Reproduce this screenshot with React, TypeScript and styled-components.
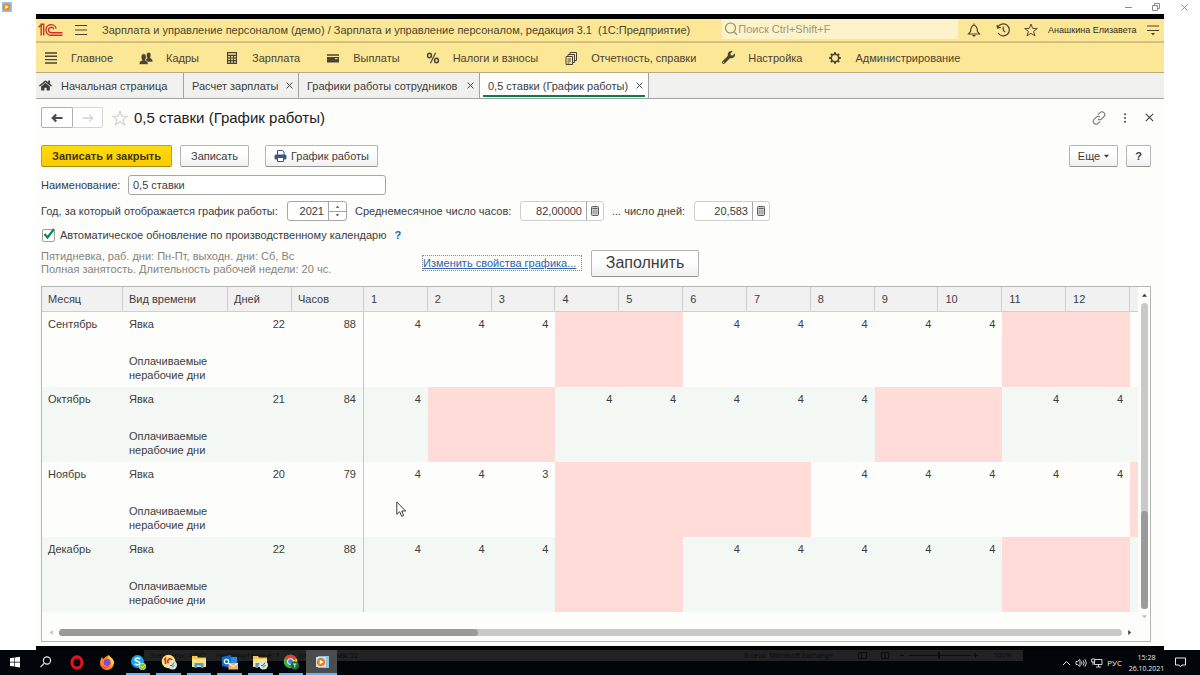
import React from "react";
import styled, { createGlobalStyle, css } from "styled-components";
import { FaHome, FaWrench } from "react-icons/fa";

const Global = createGlobalStyle`
  *, *::before, *::after { box-sizing: border-box; }
  body {
    margin: 0;
    background: #ffffff;
    color: #3c3c3c;
    font: 11px/14px "Liberation Sans", Arial, sans-serif;
  }
  button, input { font: inherit; color: inherit; }
`;

const Screen = styled.div`
  position: relative;
  display: flex;
  flex-direction: column;
  min-height: 100vh;
`;

const PlayerBar = styled.header`
  display: flex;
  justify-content: space-between;
  height: 14px;
  padding: 0 2px;
  color: #8a8a8a;
`;

const PlainButton = styled.button<{ $w?: number; $h?: number }>`
  display: inline-flex;
  align-items: center;
  justify-content: center;
  flex: none;
  width: ${(p) => (p.$w ? `${p.$w}px` : "auto")};
  height: ${(p) => (p.$h ? `${p.$h}px` : "auto")};
  padding: 0;
  border: 0;
  background: none;
`;

const Group = styled.div`
  display: flex;
  align-items: center;
`;

const AppWindow = styled.div`
  flex: 1;
  display: flex;
  flex-direction: column;
  margin: 0 36px;
  border-top: 5px solid #000;
  border-bottom: 4px solid #000;
  background: #fdfdfc;
`;

const TitleBar = styled.div`
  display: flex;
  align-items: center;
  height: 24px;
  background: #fce797;
  border-bottom: 2px solid #d3c07f;
  padding-left: 2px;
`;

const AppTitle = styled.div`
  white-space: nowrap;
  margin: 0 32px 0 3px;
  color: #4a4430;
`;

const Search = styled.label`
  display: flex;
  align-items: center;
  flex: 1;
  min-width: 0;
  height: 20px;
  margin-bottom: 2px;
  padding-left: 2px;
  background: #fdf3cb;
`;

const SearchInput = styled.input`
  flex: 1;
  min-width: 0;
  padding: 0;
  border: 0;
  background: none;
  &::placeholder { color: #9d9678; opacity: 1; }
`;

const UserArea = styled.div`
  display: flex;
  align-items: center;
  width: 206px;
  padding-left: 2px;
`;

const UserName = styled.span`
  flex: 1;
  font-size: 9px;
  white-space: nowrap;
  color: #2e2a1c;
  padding-left: 4px;
`;

const Sections = styled.nav`
  display: flex;
  align-items: center;
  gap: 26px;
  height: 30px;
  padding-left: 8px;
  background: #fce797;
  border-bottom: 1px solid #b9ab7d;
`;

const Section = styled.a`
  display: flex;
  align-items: center;
  gap: 13px;
  color: #4a4430;
  text-decoration: none;
  white-space: nowrap;
  svg { flex: none; }
`;

const Tabs = styled.div`
  display: flex;
  height: 26px;
  background: #f0f0ef;
  border-bottom: 1px solid #a3a3a3;
`;

const Tab = styled.div<{ $active?: boolean; $w: number }>`
  position: relative;
  display: flex;
  align-items: center;
  justify-content: space-between;
  width: ${(p) => p.$w}px;
  padding: 0 4px 0 8px;
  border-right: 1px solid #a3a3a3;
  white-space: nowrap;
  ${(p) =>
    p.$active &&
    css`
      background: #fff;
      &::after {
        content: "";
        position: absolute;
        left: 3px;
        right: 3px;
        bottom: 1px;
        height: 2px;
        background: #0b8048;
      }
    `}
`;

const HomeTab = styled(Tab)`
  justify-content: flex-start;
  gap: 9px;
  padding-left: 3px;
`;

const Form = styled.main`
  flex: 1;
  display: flex;
  flex-direction: column;
  padding: 8px 13px 4px 5px;
`;

const FormHead = styled.div`
  display: flex;
  align-items: center;
  height: 21px;
  margin: 0 -11px 17px 0;
`;

const NavButtons = styled.div`
  display: flex;
  height: 21px;
  border: 1px solid #d4d4d4;
  border-radius: 2px;
  margin-right: 9px;
`;

const NavButton = styled.button<{ $on?: boolean }>`
  display: flex;
  align-items: center;
  justify-content: center;
  width: ${(p) => (p.$on ? 32 : 29)}px;
  margin: ${(p) => (p.$on ? "-1px 0 -1px -1px" : "0")};
  padding: 0;
  border: ${(p) => (p.$on ? "1px solid #b0b0b0" : "0")};
  border-radius: 2px;
  background: #fff;
  color: ${(p) => (p.$on ? "#4a4a4a" : "#d2d2d2")};
`;

const FormTitle = styled.h1`
  flex: 1;
  margin: 0 0 0 6px;
  font-size: 15px;
  line-height: 20px;
  font-weight: 400;
  color: #1c1c1c;
`;

const Toolbar = styled.div`
  display: flex;
  gap: 8px;
  height: 22px;
  margin-bottom: 8px;
`;

const Button = styled.button<{ $w: number; $primary?: boolean; $big?: boolean }>`
  display: flex;
  align-items: center;
  justify-content: center;
  gap: 4px;
  width: ${(p) => p.$w}px;
  height: ${(p) => (p.$big ? 27 : 22)}px;
  padding: 0;
  border: 1px solid #b5b5b5;
  border-bottom-color: #929292;
  border-radius: 2px;
  background: linear-gradient(#ffffff 40%, #f0f0f0);
  font-size: ${(p) => (p.$big ? 16 : 11)}px;
  white-space: nowrap;
  ${(p) =>
    p.$primary &&
    css`
      border-color: #c9a400;
      border-bottom-color: #a88900;
      background: linear-gradient(#ffdb0a, #fccb00);
      color: #3d3615;
      font-weight: 700;
    `}
`;

const PrintButton = styled(Button)`
  margin-left: 8px;
`;

const Spacer = styled.div`
  flex: 1;
`;

const FieldRow = styled.div`
  display: flex;
  align-items: center;
  height: 20px;
  margin-bottom: 6px;
  white-space: nowrap;
`;

const Label = styled.label<{ $w?: number; $after?: boolean }>`
  width: ${(p) => (p.$w ? `${p.$w}px` : "auto")};
  padding-left: ${(p) => (p.$after ? 8 : 0)}px;
  flex: none;
`;

const FieldBox = styled.div<{ $w: number; $light?: boolean }>`
  display: flex;
  width: ${(p) => p.$w}px;
  height: 20px;
  border: 1px solid ${(p) => (p.$light ? "#cfcfcf" : "#a6a6a6")};
  border-radius: 3px;
  background: #fff;
  overflow: hidden;
`;

const Field = styled.input<{ $right?: boolean }>`
  flex: 1;
  min-width: 0;
  padding: 0 4px;
  border: 0;
  background: none;
  text-align: ${(p) => (p.$right ? "right" : "left")};
`;

const Spin = styled.div`
  display: flex;
  flex-direction: column;
  width: 18px;
  border-left: 1px solid #a6a6a6;
  button { flex: 1; }
  button + button { border-top: 1px solid #a6a6a6; }
`;

const CalcButton = styled(PlainButton)`
  border-left: 1px solid #a6a6a6;
`;

const CheckRow = styled.div`
  display: flex;
  align-items: center;
  height: 16px;
  margin-bottom: 6px;
`;

const CheckBox = styled.span`
  position: relative;
  width: 13px;
  height: 13px;
  margin: 0 5px 0 1px;
  svg { position: absolute; left: 1px; top: -2px; pointer-events: none; }
`;

const CheckInput = styled.input`
  appearance: none;
  display: block;
  width: 13px;
  height: 13px;
  margin: 0;
  border: 1px solid #a0a0a0;
  border-radius: 2px;
  background: #fff;
`;

const Help = styled(PlainButton)`
  margin-left: 8px;
  font-weight: 700;
  color: #1668b0;
`;

const Summary = styled.div`
  display: flex;
  align-items: center;
  height: 28px;
  margin-bottom: 9px;
`;

const Info = styled.p`
  width: 381px;
  margin: 0;
  line-height: 13px;
  color: #85857a;
  white-space: nowrap;
`;

const EditLink = styled.a`
  width: 160px;
  margin-right: 9px;
  border: 1px dotted #8a8a8a;
  color: #2e62ad;
  white-space: nowrap;
`;

const GridFrame = styled.section`
  flex: 1;
  display: flex;
  flex-direction: column;
  border: 1px solid #b4b6b4;
`;

const GridBody = styled.div`
  flex: 1;
  display: flex;
`;

const TableWrap = styled.div`
  flex: 1;
  min-width: 0;
`;

const Table = styled.table`
  width: 100%;
  table-layout: fixed;
  border-collapse: separate;
  border-spacing: 0;
`;

const HeadCell = styled.th<{ $day?: boolean }>`
  height: 25px;
  padding: 0 0 0 ${(p) => (p.$day ? 7 : 6)}px;
  text-align: left;
  font-weight: 400;
  background: #f1f1f1;
  border-right: 1px solid #cfcfcf;
  border-bottom: 1px solid #cfcfcf;
  &:last-child { border-right: 0; padding: 0; }
`;

const Row = styled.tr<{ $even: boolean }>`
  height: 75px;
  background: ${(p) => (p.$even ? "#f4f8f4" : "#fdfdfc")};
`;

const Cell = styled.td<{ $num?: boolean; $off?: boolean; $line?: boolean }>`
  padding: 5px 7px 5px 6px;
  vertical-align: top;
  text-align: ${(p) => (p.$num ? "right" : "left")};
  background: ${(p) => (p.$off ? "#ffdcd8" : "transparent")};
  border-right: ${(p) => (p.$line ? "1px solid #c4c8c4" : "0")};
  &:last-child { padding: 0; }
`;

const Kind = styled.div`
  & + & { margin-top: 23px; }
`;

const VScroll = styled.div`
  display: flex;
  flex-direction: column;
  align-items: center;
  width: 12px;
  padding: 6px 0 5px;
  gap: 5px;
`;

const HScroll = styled.div`
  display: flex;
  align-items: center;
  gap: 5px;
  height: 17px;
  padding: 0 18px 0 7px;
`;

const Track = styled.div<{ $vertical?: boolean }>`
  flex: 1;
  display: flex;
  flex-direction: ${(p) => (p.$vertical ? "column" : "row")};
  justify-content: ${(p) => (p.$vertical ? "flex-end" : "flex-start")};
  ${(p) => (p.$vertical ? "width: 7px;" : "height: 7px;")}
  border-radius: 4px;
  background: #c9c9c9;
`;

const Thumb = styled.div<{ $size: string; $vertical?: boolean }>`
  ${(p) => (p.$vertical ? `height: ${p.$size};` : `width: ${p.$size}; height: 7px;`)}
  border-radius: 4px;
  background: #9b9b9b;
`;

const Pointer = styled.svg`
  position: absolute;
  left: 396px;
  top: 501px;
`;

const Taskbar = styled.footer`
  position: relative;
  display: flex;
  justify-content: space-between;
  height: 25px;
  background: #020509;
  color: #e8e8e8;
  font-family: "Open Sans", "Noto Sans", sans-serif;
`;

const StatusGhost = styled.div`
  position: absolute;
  top: 0;
  left: 12%;
  right: 177px;
  height: 11px;
  padding: 0 12px 0 6px;
  display: flex;
  align-items: center;
  gap: 10px;
  background: #222222;
  color: #0b0b0b;
  font-size: 7px;
  line-height: 9px;
  white-space: nowrap;
`;

const Apps = styled.div`
  position: relative;
  display: flex;
  width: 337px;
`;

const AppButton = styled.button<{ $running?: boolean; $current?: boolean }>`
  flex: 1;
  position: relative;
  display: flex;
  justify-content: center;
  padding: 4px 0 0;
  border: 0;
  background: ${(p) => (p.$current ? "#4a4c4e" : "none")};
  svg { display: block; width: 16px; height: 16px; }
  &::after {
    content: "";
    position: absolute;
    left: ${(p) => (p.$current ? 0 : 3)}px;
    right: ${(p) => (p.$current ? 0 : 3)}px;
    bottom: 0;
    height: ${(p) => (p.$running ? 2 : 0)}px;
    background: #6cb2ec;
  }
`;

const Tray = styled.div`
  position: relative;
  display: flex;
  align-items: center;
  gap: 4px;
  padding-right: 14px;
  font-size: 8px;
`;

const Clock = styled.time`
  width: 37px;
  margin: 0 6px 0 2px;
  font-size: 7px;
  line-height: 11px;
  text-align: center;
`;

const Cross = ({ size = 7, w = 1.1 }: { size?: number; w?: number }) => (
  <svg width={size} height={size} viewBox="0 0 8 8" stroke="currentColor" strokeWidth={w}>
    <path d="M.7.7 7.3 7.3M7.3.7.7 7.3" />
  </svg>
);

const Arrow = ({ d, color = "#3c3c3c" }: { d: string; color?: string }) => (
  <svg width="5" height="5" viewBox="0 0 6 6" fill={color}>
    <path d={d} />
  </svg>
);

const Star = ({ size, color }: { size: number; color: string }) => (
  <svg width={size} height={size} viewBox="0 0 16 16" fill="none" stroke={color} strokeWidth="1.1">
    <path d="M8 1.2 9.9 6.1 15.2 6.3 11 9.6 12.5 14.7 8 11.8 3.5 14.7 5 9.6.8 6.3 6.1 6.1Z" />
  </svg>
);

const Logo = () => (
  <svg width="25" height="14" viewBox="0 0 25 14" fill="none" stroke="#d4301f" strokeWidth="1.4">
    <path d="M.6 4.2 3.2 1.600V12.600M2.600 1.300H5.700V12.600" strokeWidth="1.4" />
    <path d="M18.200 5.600A5.200 5.300 0 1 0 13.200 12.300H24.500" />
    <path d="M15.800 6.200A2.700 2.700 0 1 0 13.200 9.700H24.500" />
  </svg>
);

const CalcSmall = () => (
  <svg width="8" height="10" viewBox="0 0 8 10">
    <rect x=".5" y=".5" width="7" height="9" rx="1" fill="#cfcfcf" stroke="#5c5c5c" />
    <path d="M1.5 2.5h5" stroke="#5c5c5c" />
    <path d="M2 5h1M3.6 5h1M5.2 5h1M2 7h1M3.6 7h1M5.2 7h1" stroke="#6a6a6a" />
  </svg>
);

const ink = "#4a4333";

const ListIcon = () => (
  <svg width="14" height="14" viewBox="0 0 14 14" stroke={ink} strokeWidth="1.4">
    <path d="M1 2h12M1 5.3h12M1 8.6h12M1 12h12" />
  </svg>
);
const PeopleIcon = () => (
  <svg width="14" height="14" viewBox="0 0 14 14" fill={ink} stroke="#fce797" strokeWidth=".6">
    <path d="M6.500 11V8.500l1.700-1.300C7 5.500 7 1.200 9.700 1.200s2.600 4 1.500 5.600c.5.8 2.700.6 2.700 4.200z" />
    <path d="M.3 13.500c0-3.400 1.200-3.600 3-4.200C1.600 7.500 1.700 2.800 4.700 2.800s3.100 4.700 1.400 6.500c1.800.6 3 .8 3 4.200z" />
  </svg>
);
const CalcIcon = () => (
  <svg width="14" height="14" viewBox="0 0 14 14">
    <path fill={ink} fillRule="evenodd" d="M2 1h10v12H2zM3.2 2.2v1.6h7.6V2.2zM3.2 5v1.4h1.7V5zM6.1 5v1.4h1.8V5zM9.1 5v1.4h1.7V5zM3.2 7.6V9h1.7V7.6zM6.1 7.6V9h1.8V7.6zM9.1 7.6V9h1.7V7.6zM3.2 10.2v1.6h1.7v-1.6zM6.1 10.2v1.6h1.8v-1.6zM9.1 10.2v1.6h1.7v-1.6z" />
  </svg>
);
const CardIcon = () => (
  <svg width="14" height="14" viewBox="0 0 14 14">
    <path fill={ink} d="M1 3.200h12v1.600H1zM1 6h12v5.400H1z" />
    <path stroke="#fce797" d="M9 7.700h2.600" />
  </svg>
);
const PercentIcon = () => (
  <svg width="14" height="14" viewBox="0 0 14 14" fill="none" stroke={ink} strokeWidth="1.5">
    <ellipse cx="3.500" cy="4.500" rx="1.900" ry="2.300" />
    <ellipse cx="10.500" cy="9.500" rx="1.900" ry="2.300" />
    <path d="M9.600 1.800 4.400 12.200" strokeWidth="1.200" />
  </svg>
);
const DocsIcon = () => (
  <svg width="14" height="14" viewBox="0 0 14 14" fill="none" stroke={ink} strokeWidth="1">
    <path d="M2 5.500h6.500v8H2zM4 5.500V3.500h6.500v8H8.500M6 3.500v-2h6.500v8h-2" />
    <path d="M3.500 8h3.500M3.500 10h3.500M3.500 12h2" />
  </svg>
);
const GearIcon = () => (
  <svg width="14" height="14" viewBox="0 0 14 14" fill="none" stroke={ink}>
    <circle cx="7" cy="7" r="3.700" strokeWidth="1.500" />
    <path strokeWidth="2" d="M7 1.200v1.900M7 10.900v1.900M1.200 7h1.900M10.900 7h1.900M2.900 2.900l1.300 1.300M9.800 9.800l1.300 1.300M2.900 11.100l1.300-1.300M9.800 4.200l1.300-1.300" />
  </svg>
);

const sections: [string, React.ReactNode][] = [
  ["Главное", <ListIcon />],
  ["Кадры", <PeopleIcon />],
  ["Зарплата", <CalcIcon />],
  ["Выплаты", <CardIcon />],
  ["Налоги и взносы", <PercentIcon />],
  ["Отчетность, справки", <DocsIcon />],
  ["Настройка", <FaWrench size={13} color={ink} />],
  ["Администрирование", <GearIcon />],
];

const tabs = [
  { title: "Расчет зарплаты", width: 115 },
  { title: "Графики работы сотрудников", width: 181 },
  { title: "0,5 ставки (График работы)", width: 169, active: true },
];

const days = Array.from({ length: 12 }, (_, i) => i + 1);

type Month = { name: string; days: number; hours: number; off: number[]; short?: number };
const months: Month[] = [
  { name: "Сентябрь", days: 22, hours: 88, off: [4, 5, 11, 12] },
  { name: "Октябрь", days: 21, hours: 84, off: [2, 3, 9, 10] },
  { name: "Ноябрь", days: 20, hours: 79, off: [4, 5, 6, 7, 13], short: 3 },
  { name: "Декабрь", days: 22, hours: 88, off: [4, 5, 11, 12] },
];

const Folder = () => (
  <>
    <path fill="#f5c64f" d="M1 2h5l1 1.500h8V13H1z" />
    <path fill="#fde08a" d="M1 5h14v8H1z" />
    <path fill="#3f9fe0" d="M3.500 14V9h9v5h-2.500v-2.500H6V14z" />
  </>
);
const Badge = () => (
  <>
    <circle cx="11.500" cy="11" r="4.500" fill="#dfe3df" />
    <path d="M9 11.500h2l2-3M11 13.500l2.500-2.500" stroke="#357a45" fill="none" />
  </>
);

const apps: { name: string; icon: React.ReactNode; running?: boolean; current?: boolean }[] = [
  { name: "Пуск", icon: <path fill="#fff" d="M3 4.200 7.400 3.600V7.800H3zM8 3.500 13 2.800v5H8zM3 8.400h4.400v4.200L3 12zM8 8.400h5v5L8 12.700z" /> },
  {
    name: "Поиск",
    icon: (
      <g fill="none" stroke="#e6e6e6" strokeWidth="1.200">
        <circle cx="9" cy="6.500" r="3.600" />
        <path d="M6.400 9.200 2.500 13.200" />
      </g>
    ),
  },
  { name: "Opera", icon: <ellipse cx="8" cy="8.500" rx="5" ry="5.600" fill="none" stroke="#e3121f" strokeWidth="3.200" /> },
  {
    name: "Firefox",
    icon: (
      <>
        <path fill="#ff8a1c" d="M8 2c1-1 2-1 2-1 0 2 5 3 5 8a7 7 0 0 1-14 0c0-3 1-4 2-6l1 2z" />
        <path fill="#ffd13a" d="M10 1c0 2 5 3 5 8l-3 4c1-4 0-7-3-9z" />
        <circle cx="8" cy="8.500" r="3.400" fill="#7a4be0" />
        <path fill="#ff4b3a" d="M1.200 9c1 3 5 5 9 3-1 3-8 5-9-3z" />
      </>
    ),
  },
  {
    name: "Skype",
    running: true,
    icon: (
      <>
        <circle cx="7.500" cy="7.500" r="6.500" fill="#18a3e8" />
        <path d="M10 5C8.500 3.600 5 4 5.300 5.900 5.600 7.700 9.800 7 9.800 9.200 9.800 11 6.300 11.300 5 9.700" fill="none" stroke="#fff" strokeWidth="1.600" />
        <circle cx="12.500" cy="12.500" r="3.300" fill="#7fc31c" stroke="#fff" strokeWidth=".6" />
        <path d="m11 12.500 1.200 1.200 2-2.200" fill="none" stroke="#fff" />
      </>
    ),
  },
  {
    name: "1С",
    running: true,
    icon: (
      <>
        <circle cx="7.500" cy="7.500" r="6.800" fill="#fbe27a" />
        <path d="M3 6 4.500 4.500V10M11 6a2.300 2.600 0 1 0-2 4h3" fill="none" stroke="#d7261c" strokeWidth="1.600" />
        <Badge />
      </>
    ),
  },
  { name: "Проводник", running: true, icon: <Folder /> },
  {
    name: "Outlook",
    running: true,
    icon: (
      <>
        <path fill="#0a6fc9" d="M0 3 9 1v13l-9-2z" />
        <path fill="#2b8be0" d="M9 3h6v7H9z" />
        <circle cx="4.500" cy="7.500" r="2.200" fill="none" stroke="#fff" strokeWidth="1.300" />
        <path fill="#f7b066" d="M6.500 9h9.500v6.500H6.500z" />
        <path d="m6.500 9 4.700 3.600L16 9" fill="none" stroke="#fff" />
      </>
    ),
  },
  { name: "Папка", running: true, icon: <><Folder /><Badge /></> },
  {
    name: "Chrome",
    running: true,
    icon: (
      <>
        <circle cx="7.500" cy="7.500" r="6.800" fill="#3fae4d" />
        <path fill="#e2402f" d="M7.500 7.500 1.600 4.100A6.800 6.800 0 0 1 13.800 5z" />
        <path fill="#f8cf2e" d="M7.500 7.500 13.800 5A6.800 6.800 0 0 1 8 14.300z" />
        <circle cx="7.500" cy="7.500" r="3" fill="#4486f0" stroke="#fff" />
        <circle cx="11.800" cy="11.500" r="4.300" fill="#1e6a35" />
        <path d="M10 10h3.600M11.800 10v3.500" stroke="#dfe" strokeWidth=".9" />
      </>
    ),
  },
  {
    name: "Проигрыватель",
    running: true,
    current: true,
    icon: (
      <>
        <path fill="#8cc4e6" d="M4 2h11v12H4z" />
        <path fill="#cfe7f5" d="M2 3h10v10H2z" />
        <circle cx="7" cy="8" r="4.300" fill="#ef7d1a" />
        <path fill="#fff" d="m5.700 5.700 4 2.300-4 2.300z" />
      </>
    ),
  },
];

export default function App() {
  return (
    <Screen>
      <Global />
      <PlayerBar>
        <svg width="10" height="13" viewBox="0 0 10 13">
          <rect y="2" width="10" height="10" fill="#8dc3e6" />
          <circle cx="4.500" cy="7" r="3.800" fill="#f08a1e" />
          <path fill="#fff" d="m3.300 5 3.400 2-3.400 2z" />
        </svg>
        <Group>
          <PlainButton $w={28} $h={13} aria-label="Свернуть">
            <svg width="7" height="7" stroke="currentColor"><path d="M0 3.500h7" /></svg>
          </PlainButton>
          <PlainButton $w={28} $h={13} aria-label="Развернуть">
            <svg width="8" height="8" fill="none" stroke="currentColor"><path d="M.5 2.500h5v5h-5zM2.500 2.500v-2h5v5h-2" /></svg>
          </PlainButton>
          <PlainButton $w={28} $h={13} aria-label="Закрыть"><Cross /></PlainButton>
        </Group>
      </PlayerBar>

      <AppWindow>
        <TitleBar>
          <Logo />
          <PlainButton $w={36} $h={20} aria-label="Меню">
            <svg width="12" height="12" stroke={ink} strokeWidth="1.100"><path d="M0 1.500h12M0 6h12M0 10.500h12" /></svg>
          </PlainButton>
          <AppTitle>Зарплата и управление персоналом (демо) / Зарплата и управление персоналом, редакция 3.1&nbsp; (1С:Предприятие)</AppTitle>
          <Search>
            <svg width="14" height="14" viewBox="0 0 14 14" fill="none" stroke="#8c8668" strokeWidth="1.100">
              <circle cx="6.500" cy="6" r="5" /><path d="m10 9.600 3 3.200" />
            </svg>
            <SearchInput aria-label="Поиск" placeholder="Поиск Ctrl+Shift+F" />
          </Search>
          <UserArea>
            <PlainButton $w={28} aria-label="Уведомления">
              <svg width="14" height="14" viewBox="0 0 14 14" fill="none" stroke={ink} strokeWidth="1.200">
                <path d="M1.500 11h11L10.500 8.500C10.300 5 9.800 3 7 2 4.200 3 3.700 5 3.500 8.500ZM7 .6V2" />
                <path fill={ink} stroke="none" d="M5 12h4l-2 2z" />
              </svg>
            </PlainButton>
            <PlainButton $w={30} aria-label="История">
              <svg width="14" height="14" viewBox="0 0 14 14" fill="none" stroke={ink} strokeWidth="1.200">
                <path d="M1.800 4.500A6 6 0 1 1 2.200 10M1 1.800l.6 3.200 3.200-.6M7.200 3.600V7.200l2 2" />
              </svg>
            </PlainButton>
            <PlainButton $w={26} aria-label="Избранное"><Star size={14} color={ink} /></PlainButton>
            <UserName>Анашкина Елизавета</UserName>
            <PlainButton $w={23} aria-label="Сервис">
              <svg width="12" height="12" stroke={ink} strokeWidth="1.100"><path d="M0 2h12M0 6.500h12" /><path fill={ink} stroke="none" d="M4 9h4l-2 2.500z" /></svg>
            </PlainButton>
          </UserArea>
        </TitleBar>

        <Sections>
          {sections.map(([name, icon]) => (
            <Section href="#" key={name}>{icon}{name}</Section>
          ))}
        </Sections>

        <Tabs>
          <HomeTab $w={148}><FaHome size={13} color="#3c3c3c" />Начальная страница</HomeTab>
          {tabs.map((t) => (
            <Tab key={t.title} $w={t.width} $active={t.active}>
              {t.title}
              <PlainButton $w={10} aria-label="Закрыть вкладку"><Cross size={7} /></PlainButton>
            </Tab>
          ))}
        </Tabs>

        <Form>
          <FormHead>
            <NavButtons>
              <NavButton $on aria-label="Назад">
                <svg width="12" height="10" viewBox="0 0 12 10" fill="none" stroke="currentColor" strokeWidth="2.200"><path d="M11.500 5H2M5.200 1.400 1.700 5 5.200 8.600" /></svg>
              </NavButton>
              <NavButton aria-label="Вперед">
                <svg width="12" height="10" viewBox="0 0 12 10" fill="none" stroke="currentColor" strokeWidth="1.300"><path d="M.5 5h10M7 1.400 10.600 5 7 8.600" /></svg>
              </NavButton>
            </NavButtons>
            <PlainButton aria-label="В избранное"><Star size={16} color="#cfcfcf" /></PlainButton>
            <FormTitle>0,5 ставки (График работы)</FormTitle>
            <PlainButton $w={26} aria-label="Ссылка">
              <svg width="14" height="14" viewBox="0 0 14 14" fill="none" stroke="#777" strokeWidth="1.100">
                <path d="M5.800 3.600 8 1.700a2.700 2.700 0 0 1 3.900 3.900L9.700 7.800a2.700 2.700 0 0 1-3.700.2M8.200 10.400 6 12.300a2.700 2.700 0 0 1-3.900-3.900L4.300 6.200A2.700 2.700 0 0 1 8 6" />
              </svg>
            </PlainButton>
            <PlainButton $w={25} aria-label="Еще">
              <svg width="4" height="10" viewBox="0 0 4 10" fill="#4a4a4a"><circle cx="2" cy="1.200" r="1" /><circle cx="2" cy="5" r="1" /><circle cx="2" cy="8.800" r="1" /></svg>
            </PlainButton>
            <PlainButton $w={25} aria-label="Закрыть"><Cross size={9} w={0.9} /></PlainButton>
          </FormHead>

          <Toolbar>
            <Button $w={131} $primary>Записать и закрыть</Button>
            <Button $w={69}>Записать</Button>
            <PrintButton $w={113}>
              <svg width="13" height="12" viewBox="0 0 13 12">
                <path fill="#fff" stroke="#37597c" d="M3.500 5V.5h5l1.500 1.500V5" />
                <rect x=".5" y="4.500" width="12" height="5" rx="1.500" fill="#37597c" />
                <path fill="#fff" stroke="#37597c" d="M3.500 7.500h6v4h-6z" />
              </svg>
              График работы
            </PrintButton>
            <Spacer />
            <Button $w={49}>Еще <Arrow d="M0 1h6L3 4.500z" /></Button>
            <Button $w={25}><b>?</b></Button>
          </Toolbar>

          <FieldRow>
            <Label $w={87} htmlFor="name">Наименование:</Label>
            <FieldBox $w={258}><Field id="name" defaultValue="0,5 ставки" /></FieldBox>
          </FieldRow>

          <FieldRow>
            <Label $w={246} htmlFor="year">Год, за который отображается график работы:</Label>
            <FieldBox $w={60}>
              <Field id="year" $right defaultValue="2021" />
              <Spin>
                <PlainButton aria-label="Больше"><Arrow d="M1 4.500h4L3 2z" /></PlainButton>
                <PlainButton aria-label="Меньше"><Arrow d="M1 1.500h4L3 4z" /></PlainButton>
              </Spin>
            </FieldBox>
            <Label $w={173} $after htmlFor="hours">Среднемесячное число часов:</Label>
            <FieldBox $w={84} $light>
              <Field id="hours" $right defaultValue="82,00000" />
              <CalcButton $w={17} aria-label="Калькулятор"><CalcSmall /></CalcButton>
            </FieldBox>
            <Label $w={90} $after htmlFor="daysAvg">... число дней:</Label>
            <FieldBox $w={76} $light>
              <Field id="daysAvg" $right defaultValue="20,583" />
              <CalcButton $w={17} aria-label="Калькулятор"><CalcSmall /></CalcButton>
            </FieldBox>
          </FieldRow>

          <CheckRow>
            <CheckBox>
              <CheckInput id="auto" type="checkbox" defaultChecked />
              <svg width="12" height="13" viewBox="0 0 12 13" fill="none" stroke="#0c8a50" strokeWidth="2.200"><path d="m1.500 7 3 3.500L11 2" /></svg>
            </CheckBox>
            <Label htmlFor="auto">Автоматическое обновление по производственному календарю</Label>
            <Help>?</Help>
          </CheckRow>

          <Summary>
            <Info>
              Пятидневка, раб. дни: Пн-Пт, выходн. дни: Сб, Вс<br />
              Полная занятость. Длительность рабочей недели: 20 чс.
            </Info>
            <EditLink href="#">Изменить свойства графика...</EditLink>
            <Button $w={108} $big>Заполнить</Button>
          </Summary>

          <GridFrame>
            <GridBody>
              <TableWrap>
                <Table>
                  <colgroup>
                    <col width="81" /><col width="105" /><col width="64" /><col width="72" />
                    {days.map((d) => <col key={d} />)}
                    <col width="8" />
                  </colgroup>
                  <thead>
                    <tr>
                      <HeadCell>Месяц</HeadCell>
                      <HeadCell>Вид времени</HeadCell>
                      <HeadCell>Дней</HeadCell>
                      <HeadCell>Часов</HeadCell>
                      {days.map((d) => <HeadCell $day key={d}>{d}</HeadCell>)}
                      <HeadCell />
                    </tr>
                  </thead>
                  <tbody>
                    {months.map((m, i) => (
                      <Row key={m.name} $even={i % 2 === 1}>
                        <Cell>{m.name}</Cell>
                        <Cell>
                          <Kind>Явка</Kind>
                          <Kind>Оплачиваемые<br />нерабочие дни</Kind>
                        </Cell>
                        <Cell $num>{m.days}</Cell>
                        <Cell $num $line>{m.hours}</Cell>
                        {days.map((d) => (
                          <Cell key={d} $num $off={m.off.includes(d)}>
                            {m.off.includes(d) ? "" : m.short === d ? 3 : 4}
                          </Cell>
                        ))}
                        <Cell $off={m.off.includes(13)} />
                      </Row>
                    ))}
                  </tbody>
                </Table>
              </TableWrap>
              <VScroll>
                <Arrow d="M0 4.500h6L3 1z" />
                <Track $vertical><Thumb $vertical $size="32%" /></Track>
                <Arrow d="M0 1.500h6L3 5z" color="#bdbdbd" />
              </VScroll>
            </GridBody>
            <HScroll>
              <Arrow d="M4.500 0v6L1 3z" color="#bdbdbd" />
              <Track><Thumb $size="39.4%" /></Track>
              <Arrow d="M1.500 0v6L5 3z" />
            </HScroll>
          </GridFrame>
        </Form>
      </AppWindow>

      <Taskbar>
        <StatusGhost>
          <span>Элементы: 4 282</span>
          <span>Непрочитанные: 1</span>
          <span>▲ Напоминания: 22</span>
          <Spacer />
          <span>В сети: Microsoft Exchange</span>
          <svg width="140" height="9" fill="none" stroke="#0b0b0b">
            <path d="M15.500 1.500h8v6h-8zM18.500 1.500v6M38.500 1.500h7v6h-7zM42 1.500v6M57 4.500h4M66 4.500h62" />
            <path strokeWidth="2" d="M96 1v7" />
            <path d="M130 4.500h5M132.500 2v5" />
          </svg>
          <span>100%</span>
        </StatusGhost>
        <Apps>
          {apps.map((a) => (
            <AppButton key={a.name} aria-label={a.name} $running={a.running} $current={a.current}>
              <svg viewBox="0 0 16 16">{a.icon}</svg>
            </AppButton>
          ))}
        </Apps>
        <Tray>
          <svg width="9" height="8" fill="none" stroke="#e8e8e8"><path d="m1 6 3.500-3.500L8 6" /></svg>
          <svg width="12" height="10" viewBox="0 0 12 10" fill="none" stroke="#e8e8e8" strokeWidth=".9"><path d="M1 3.500h1.500L5 1.500v7l-2.500-2H1zM6.500 3.500q1 1.500 0 3M8.200 2.400q2 2.600 0 5.200M9.900 1.300q3 3.700 0 7.400" /></svg>
          <svg width="12" height="10" viewBox="0 0 12 10" fill="none" stroke="#e8e8e8" strokeWidth=".9"><path d="M4 1.500h7v5H3.500V4M5 9h5M7.500 6.500V9M.7 1h3v3h-3zM2 4v3" /></svg>
          <span>РУС</span>
          <Clock>15:28<br />26.10.2021</Clock>
          <svg width="11" height="11" viewBox="0 0 11 11" fill="none" stroke="#e8e8e8"><path d="M.5 1h10v7H7L5.500 9.800 4 8H.5z" /></svg>
        </Tray>
      </Taskbar>

      <Pointer width="11" height="17" viewBox="0 0 11 17" fill="#fff" stroke="#3a3a3a">
        <path d="M.8 1v12.400l2.900-2.700 2 4.700 2-.9-2-4.500h4z" />
      </Pointer>
    </Screen>
  );
}
